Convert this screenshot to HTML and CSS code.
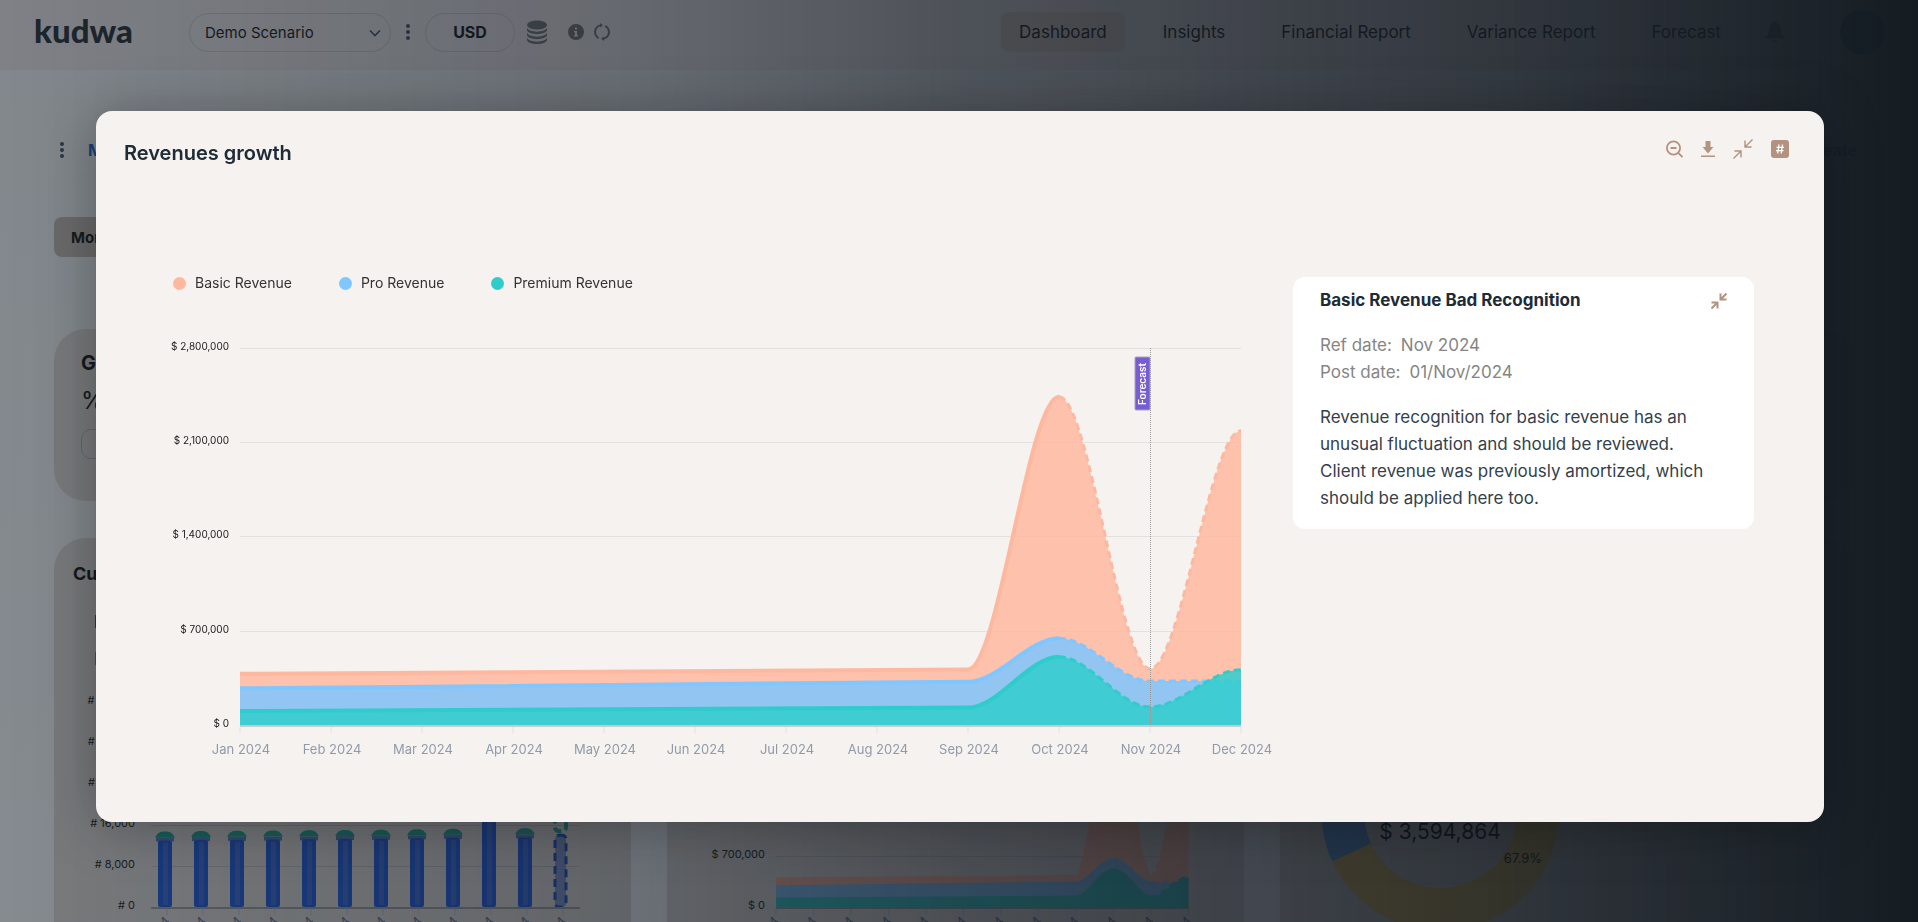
FILE: index.html
```html
<!DOCTYPE html>
<html lang="en">
<head>
    <meta charset="UTF-8">
    <meta name="viewport" content="width=device-width, initial-scale=1.0">
    <title>Kudwa - Dashboard</title>
    <link rel="stylesheet" href="styles.css">
</head>
<body>

<header class="topbar">
    <a class="logo" href="#">kudwa</a>
    <div class="scenario">
        <select class="scenario-select" aria-label="Scenario">
            <option>Demo Scenario</option>
        </select>
        <svg class="chevron" width="12" height="8" viewBox="0 0 12 8"><path d="M1 1.5l5 5 5-5" fill="none" stroke="currentColor" stroke-width="1.6"/></svg>
    </div>
    <button class="icon-btn dots" aria-label="Scenario menu">
        <svg width="4" height="16" viewBox="0 0 4 16"><circle cx="2" cy="2" r="2"/><circle cx="2" cy="8" r="2"/><circle cx="2" cy="14" r="2"/></svg>
    </button>
    <button class="currency">USD</button>
    <div class="tools">
        <button class="icon-btn" aria-label="Data">
            <svg width="20" height="24" viewBox="0 0 20 24"><ellipse cx="10" cy="5" rx="10" ry="4.6"/><path d="M0 7.500c1 5.500 19 5.500 20 0v2.500c-1 5.500-19 5.500-20 0zM0 12.500c1 5.500 19 5.500 20 0v2.500c-1 5.500-19 5.500-20 0zM0 17.500c1 5.500 19 5.500 20 0v2.500c-1 5.300-19 5.300-20 0z"/></svg>
        </button>
        <button class="icon-btn info" aria-label="Info">
            <svg width="16" height="16" viewBox="0 0 16 16"><path fill-rule="evenodd" d="M8 0a8 8 0 100 16A8 8 0 008 0zM7 3.500h2v2H7zM6 7h3v4h1v1.500H6V11h1V8.500H6z"/></svg>
        </button>
        <button class="icon-btn" aria-label="Refresh">
            <svg width="18" height="18" viewBox="0 0 18 18" fill="none" stroke="currentColor" stroke-width="2"><circle cx="9" cy="9" r="7" stroke-dasharray="17 5" transform="rotate(-62 9 9)"/><path d="M7 0l3 2.200L7 4.500zM11 18l-3-2.200 3-2.300z" fill="currentColor" stroke="none"/></svg>
        </button>
    </div>
    <nav class="nav">
        <a class="active" href="#">Dashboard</a>
        <a href="#">Insights</a>
        <a href="#">Financial Report</a>
        <a href="#">Variance Report</a>
        <a href="#">Forecast</a>
    </nav>
    <button class="icon-btn bell" aria-label="Notifications">
        <svg width="18" height="22" viewBox="0 0 18 22"><path d="M9 0c1 0 1.600.7 1.600 1.700C14 2.500 15 5.500 15 8.500c0 4 1 5.500 3 7.500v1.500H0V16c2-2 3-3.500 3-7.500 0-3 1-6 4.400-6.800C7.400.7 8 0 9 0zM6.500 19h5a2.500 2.500 0 01-5 0z"/></svg>
    </button>
    <button class="avatar" aria-label="Account"></button>
</header>

<main class="page">
    <div class="page-head">
        <button class="icon-btn dots" aria-label="Dashboard menu">
            <svg width="4" height="16" viewBox="0 0 4 16"><circle cx="2" cy="2" r="2"/><circle cx="2" cy="8" r="2"/><circle cx="2" cy="14" r="2"/></svg>
        </button>
        <a class="tab" href="#">Main</a>
        <a class="create" href="#">Create</a>
    </div>
    <button class="period">Monthly</button>

    <section class="card kpi">
        <h2>Growth</h2>
        <p>% 12</p>
        <span class="pill"></span>
    </section>

    <div class="cards">
        <section class="card">
            <h2>Customers</h2>
            <ul class="squares">
                <li class="blue"></li>
                <li class="green"></li>
            </ul>
            <svg id="customersChart" viewBox="0 0 539 300"></svg>
        </section>
        <section class="card">
            <svg id="revenueSmall" viewBox="0 0 539 300"></svg>
        </section>
        <section class="card">
            <svg viewBox="0 0 539 300">
                <path d="M33.300 170.500A119 119 0 1 0 141 2V45A76 76 0 1 1 72 152.500z" fill="#f7cc5c"/>
                <path d="M33.300 170.500A119 119 0 0 1 141 2V45A76 76 0 0 0 72 152.500z" fill="#5fa8f5"/>
                <text class="donut-total" x="141" y="148">$ 3,594,864</text>
                <text class="donut-label" x="224" y="172">67.9%</text>
            </svg>
        </section>
    </div>
</main>

<div class="overlay">
    <div class="modal" role="dialog" aria-labelledby="modalTitle">
        <div class="modal-head">
            <h1 id="modalTitle">Revenues growth</h1>
            <div class="modal-tools">
                <button class="icon-btn" aria-label="Zoom out">
                    <svg width="17" height="18" viewBox="0 0 17 18" fill="none" stroke="currentColor" stroke-width="1.800"><circle cx="7.500" cy="8" r="6.600"/><path d="M12.200 12.800l4.300 4.300M4.500 8h6"/></svg>
                </button>
                <button class="icon-btn" aria-label="Download">
                    <svg width="14" height="18" viewBox="0 0 14 18"><path d="M4.500 1h5v6h3L7 13.500 1.500 7h3zM0 15.500h14V17H0z"/></svg>
                </button>
                <button class="icon-btn" aria-label="Collapse">
                    <svg width="20" height="20" viewBox="0 0 20 20" fill="none" stroke="currentColor" stroke-width="1.400"><path d="M19.500.5l-7.500 7.500M12 1.500V8h6.500M.5 19.500L8 12M1.500 12H8v6.500"/></svg>
                </button>
                <button class="icon-btn" aria-label="Show numbers">
                    <svg width="18" height="18" viewBox="0 0 18 18"><rect width="18" height="18" rx="3"/><path d="M8 4.500l-1.300 9M11.500 4.500l-1.300 9M5.500 7.300h7.500M5 10.700h7.500" stroke="#fff" stroke-width="1.300"/></svg>
                </button>
            </div>
        </div>
        <div class="modal-body">
            <div class="chart">
                <ul class="legend">
                    <li class="basic">Basic Revenue</li>
                    <li class="pro">Pro Revenue</li>
                    <li class="premium">Premium Revenue</li>
                </ul>
                <svg id="revenueChart" viewBox="0 0 1130 440"></svg>
            </div>
            <aside class="note">
                <div class="note-head">
                    <h2>Basic Revenue Bad Recognition</h2>
                    <button class="icon-btn" aria-label="Collapse note">
                        <svg width="16" height="18" viewBox="1 1 16 18" fill="none" stroke="currentColor" stroke-width="2"><path d="M16.500 2.500L11 8M10.500 2.500V8.500H16.500M1.500 17.500L7 12M1.500 11.500H7.500V17.500"/></svg>
                    </button>
                </div>
                <dl>
                    <div><dt>Ref date:</dt><dd>Nov 2024</dd></div>
                    <div><dt>Post date:</dt><dd>01/Nov/2024</dd></div>
                </dl>
                <p>Revenue recognition for basic revenue has an unusual fluctuation and should be reviewed. Client revenue was previously amortized, which should be applied here too.</p>
            </aside>
        </div>
    </div>
</div>

<script src="charts.js"></script>
</body>
</html>
```

FILE: styles.css
```css
* {
    box-sizing: border-box;
}
body {
    margin: 0;
    height: 100vh;
    overflow: hidden;
    font-family: Inter, "Liberation Sans", sans-serif;
    font-size: 16px;
    color: #15181c;
    background: linear-gradient(to bottom, #eff3f6, #f8fbff);
}
h1, h2, p, ul, dl, dd {
    margin: 0;
    padding: 0;
}
ul {
    list-style: none;
}
a {
    color: inherit;
    text-decoration: none;
}
button, select {
    font: inherit;
    color: inherit;
    background: none;
    border: none;
    padding: 0;
}
svg {
    display: block;
}
.icon-btn {
    display: flex;
    color: #70757c;
    fill: currentColor;
}
.dots {
    color: #42566b;
}

/* top bar */
.topbar {
    display: flex;
    align-items: center;
    height: 70px;
    padding: 0 33px 6px 34px;
    background: #eae7ea;
}
.logo {
    width: 155px;
    font-family: Lato, sans-serif;
    font-weight: 900;
    font-size: 33px;
    line-height: 36px;
    padding-bottom: 4px;
    color: #272f38;
}
.scenario {
    position: relative;
    width: 202px;
    margin-right: 15px;
}
.scenario-select {
    appearance: none;
    width: 100%;
    height: 39px;
    padding-left: 15px;
    font-size: 15px;
    border: 1px solid #cbccd0;
    border-radius: 20px;
}
.chevron {
    position: absolute;
    right: 10px;
    top: 16px;
    color: #42566b;
}
.currency {
    width: 90px;
    height: 39px;
    margin: 0 12px 0 15px;
    font-weight: 700;
    font-size: 16px;
    border: 1px solid #cbccd0;
    border-radius: 20px;
}
.tools {
    display: flex;
    align-items: center;
    gap: 9px;
}
.info {
    margin-left: 12px;
}
.nav {
    display: flex;
    gap: 20px;
    margin-left: auto;
    margin-right: 27px;
    font-size: 17px;
}
.nav a {
    padding: 0 18px;
    line-height: 40px;
    border-radius: 8px;
}
.nav .active {
    background: #ddd6ce;
}
.bell {
    margin-right: 56px;
    color: #7a7e84;
}
.avatar {
    width: 45px;
    height: 45px;
    border-radius: 50%;
    background: #3a6f6c;
}

/* page behind the dialog */
.page {
    padding: 60px 61px 0 54px;
}
.page-head {
    display: flex;
    align-items: center;
    height: 40px;
    padding-left: 6px;
}
.tab {
    margin-left: 24px;
    font-weight: 700;
    color: #1f66d0;
}
.create {
    margin-left: auto;
    font-weight: 700;
    color: #3f6fc4;
}
.period {
    display: block;
    height: 40px;
    margin-top: 47px;
    padding: 0 17px;
    font-weight: 700;
    font-size: 15px;
    border-radius: 8px;
    background: #c3bab6;
}
.card {
    border-radius: 32px;
    background: #dedad8;
}
.card h2 {
    font-size: 18px;
    line-height: 24px;
}
.kpi {
    height: 172px;
    margin-top: 72px;
    padding: 22px 27px;
}
.kpi h2 {
    font-size: 20px;
}
.kpi p {
    margin: 10px 0 12px;
    font-size: 24px;
    line-height: 32px;
}
.pill {
    display: block;
    width: 120px;
    height: 30px;
    border: 1px solid #b4b6ba;
    border-radius: 10px;
}
.cards {
    display: grid;
    grid-template-columns: repeat(3, 1fr);
    gap: 36px;
    margin-top: 37px;
}
.cards .card {
    display: flex;
    flex-direction: column;
    justify-content: flex-end;
    padding: 24px 19px;
}
.squares {
    display: flex;
    flex-direction: column;
    gap: 24px;
    margin: 29px 22px 26px;
}
.squares li {
    width: 13px;
    height: 13px;
}
.squares .blue {
    background: #2455c8;
}
.squares .green {
    background: #1fb5a3;
}

/* dialog */
.overlay {
    position: fixed;
    inset: 0;
    padding: 111px 94px 100px 96px;
    background: linear-gradient(to right, rgba(20, 28, 34, 0.5), rgba(20, 26, 34, 0.62) 33%, rgba(20, 26, 34, 0.73) 50%, rgba(20, 26, 34, 0.86) 78%, rgb(20, 28, 34));
}
.modal {
    min-height: 711px;
    padding: 27px 28px 40px;
    border-radius: 16px;
    background: #f6f2ef;
    box-shadow: 0 4px 56px rgba(0, 0, 0, 0.3);
}
.modal-head {
    display: flex;
    justify-content: space-between;
    height: 139px;
}
.modal-head h1 {
    font-size: 20px;
    font-weight: 600;
    line-height: 30px;
    color: #202b38;
}
.modal-tools {
    display: flex;
    align-items: center;
    gap: 18px;
    height: 22px;
    padding-right: 7px;
}
.modal .icon-btn {
    color: #b3927f;
}
.modal-body {
    display: flex;
    align-items: flex-start;
    gap: 13px;
    padding: 0 42px 0 26px;
}
.chart {
    flex: 1;
}
.legend {
    display: flex;
    gap: 47px;
    padding: 0 23px;
    margin-bottom: 41px;
    font-size: 14px;
    line-height: 12px;
    color: #333;
}
.legend li {
    display: flex;
    align-items: center;
    gap: 9px;
    height: 12px;
}
.legend li::before {
    content: "";
    width: 13px;
    height: 13px;
    border-radius: 50%;
    background: currentColor;
}
.legend .basic::before {
    background: #ffb8a0;
}
.legend .pro::before {
    background: #80c6ff;
}
.legend .premium::before {
    background: #30cccc;
}
.note {
    width: 461px;
    padding: 10px 27px 17px;
    border-radius: 12px;
    background: #fff;
    font-size: 17px;
    line-height: 27px;
    color: #35404d;
}
.note-head {
    display: flex;
    align-items: center;
    justify-content: space-between;
    margin-bottom: 18px;
}
.note h2 {
    font-size: 17px;
    font-weight: 700;
    line-height: 27px;
    color: #202b38;
}
.note dl {
    margin-bottom: 18px;
    color: #858585;
}
.note dl div {
    display: flex;
    gap: 9px;
}
.note p {
    padding-right: 12px;
}

/* charts */
.grid {
    stroke: #e2e1df;
}
.axis {
    stroke: #c9cacb;
    stroke-width: 2;
}
.y-label {
    font-size: 10px;
    text-anchor: end;
    fill: #222;
}
.x-label {
    font-size: 13px;
    text-anchor: middle;
    fill: #8f9bab;
}
.x-label.tilted {
    text-anchor: end;
    fill: #62718a;
}
.card .y-label {
    font-size: 11px;
}
.card .grid {
    stroke: #c0c2c5;
}
.card .axis {
    stroke: #9b9ea3;
}
.area {
    fill-opacity: 0.85;
}
.card .area {
    fill-opacity: 1;
}
.line {
    fill: none;
    stroke-width: 4;
}
.line.forecast {
    stroke-width: 3;
    stroke-dasharray: 7 4;
}
.marker {
    stroke: #999;
    stroke-dasharray: 1 1;
}
.marker-box {
    fill: #775dd0;
    stroke: #a9a3bd;
}
.marker-text {
    font-size: 10px;
    font-weight: 600;
    text-anchor: middle;
    fill: #fff;
}
.donut-total {
    font-size: 21px;
    text-anchor: middle;
}
.donut-label {
    font-size: 13px;
    text-anchor: middle;
}
```

FILE: charts.js
```js
const NS = 'http://www.w3.org/2000/svg';
const months = ['Jan', 'Feb', 'Mar', 'Apr', 'May', 'Jun', 'Jul', 'Aug', 'Sep', 'Oct', 'Nov', 'Dec'];

// values in thousands
const series = [
    { color: '#ffb8a0', data: [380, 384, 388, 392, 396, 400, 404, 408, 412, 2436, 416, 2184] },
    { color: '#80c6ff', data: [272, 278, 284, 290, 296, 302, 308, 314, 321, 644, 326, 326] },
    { color: '#30cccc', data: [104, 107, 110, 113, 116, 120, 123, 126, 130, 506, 134, 410] }
];

function add(svg, tag, attrs, text) {
    const el = document.createElementNS(NS, tag);
    for (const key in attrs) el.setAttribute(key, attrs[key]);
    if (text) el.textContent = text;
    svg.appendChild(el);
    return el;
}

function drawGrid(svg, o) {
    for (let i = 0; i <= o.ticks; i++) {
        const y = Math.round(o.bottom - i * o.tickHeight) + 0.5;
        if (i > 0) add(svg, 'line', { class: 'grid', x1: o.left, x2: o.right, y1: y, y2: y });
        add(svg, 'text', { class: 'y-label', x: o.left - o.labelGap, y: y + 1 }, o.unit + ' ' + (i * o.tickValue).toLocaleString('en-US'));
    }
}

function drawAxis(svg, o) {
    add(svg, 'line', { class: 'axis', x1: o.left, x2: o.right, y1: o.bottom + 1, y2: o.bottom + 1 });
    months.forEach((month, i) => {
        const x = o.firstTick + i * o.step;
        add(svg, 'line', { class: 'grid', x1: x, x2: x, y1: o.bottom + 2, y2: o.bottom + 8 });
        if (o.tilted) {
            add(svg, 'text', { class: 'x-label tilted', x: x + 4, y: o.bottom + 15, transform: `rotate(-45 ${x + 4} ${o.bottom + 15})` }, month + ' 2024');
        } else {
            add(svg, 'text', { class: 'x-label', x: x + 1, y: o.bottom + 29 }, month + ' 2024');
        }
    });
}

function curve(points) {
    return points.slice(1).map((p, i) => {
        const prev = points[i];
        const third = (p[0] - prev[0]) / 3;
        return `C${prev[0] + third} ${prev[1]} ${p[0] - third} ${p[1]} ${p[0]} ${p[1]}`;
    }).join('');
}

function drawAreas(svg, o) {
    series.forEach(s => {
        const pts = s.data.map((v, i) => [o.left + i * o.step, o.bottom - v / 700 * o.tickHeight]);
        // the slow climb up to September is a straight line
        const start = `M${pts[0]}L${pts[8]}`;
        add(svg, 'path', { class: 'area', fill: s.color, d: `${start}${curve(pts.slice(8))}V${o.bottom}H${o.left}Z` });
        add(svg, 'path', { class: 'line', stroke: s.color, d: start + curve(pts.slice(8, o.forecastFrom + 1)) });
        add(svg, 'path', { class: 'line forecast', stroke: s.color, d: `M${pts[o.forecastFrom]}${curve(pts.slice(o.forecastFrom))}` });
    });
}

const main = { left: 90, right: 1091, firstTick: 90, step: 91, bottom: 395, ticks: 4, tickHeight: 94.3, tickValue: 700000, unit: '$', labelGap: 11, forecastFrom: 9 };
const mainSvg = document.getElementById('revenueChart');
drawGrid(mainSvg, main);
drawAreas(mainSvg, main);
drawAxis(mainSvg, main);
add(mainSvg, 'line', { class: 'marker', x1: 1000.5, x2: 1000.5, y1: 18, y2: 395 });
add(mainSvg, 'rect', { class: 'marker-box', x: 985, y: 27, width: 15, height: 53, rx: 1 });
add(mainSvg, 'text', { class: 'marker-text', x: 996, y: 54, transform: 'rotate(-90 996 54)' }, 'Forecast');

const small = { left: 90, right: 503, firstTick: 90, step: 37.5, bottom: 216, ticks: 1, tickHeight: 51, tickValue: 700000, unit: '$', labelGap: 11, forecastFrom: 10, tilted: true };
const smallSvg = document.getElementById('revenueSmall');
drawGrid(smallSvg, small);
drawAreas(smallSvg, small);
drawAxis(smallSvg, small);

const bars = { left: 78, right: 507, firstTick: 94, step: 36, bottom: 216, ticks: 5, tickHeight: 41, tickValue: 8000, unit: '#', labelGap: 16, tilted: true };
const barSvg = document.getElementById('customersChart');
drawGrid(barSvg, bars);
[13000, 13050, 13100, 13150, 13200, 13250, 13300, 13400, 13500, 26000, 13600, 14000].forEach((v, i) => {
    const x = 85 + i * bars.step;
    const h = v / 8000 * bars.tickHeight;
    const top = bars.bottom - h;
    if (i === 11) {
        add(barSvg, 'rect', { x: x + 1, y: top, width: 11, height: h, rx: 4, fill: '#7f95cf', stroke: '#1d4fc4', 'stroke-width': 3, 'stroke-dasharray': '8 5' });
        add(barSvg, 'rect', { x: x + 1, y: top - 20, width: 11, height: 16, rx: 4, fill: 'none', stroke: '#1fa595', 'stroke-width': 4, 'stroke-dasharray': '8 4' });
        return;
    }
    add(barSvg, 'path', { fill: '#1fa595', d: `M${x - 3} ${top - 3}q3-6 8-6h4q5 0 8 6z` });
    add(barSvg, 'rect', { x: x - 2, y: top - 3, width: 18, height: 4, fill: '#5580b8' });
    add(barSvg, 'rect', { x: x, y: top, width: 14, height: h, rx: 2, fill: '#1d5ae0' });
    add(barSvg, 'rect', { x: x + 5, y: top + 2, width: 5, height: h - 4, fill: '#3d6ad8' });
});
drawAxis(barSvg, bars);
```
